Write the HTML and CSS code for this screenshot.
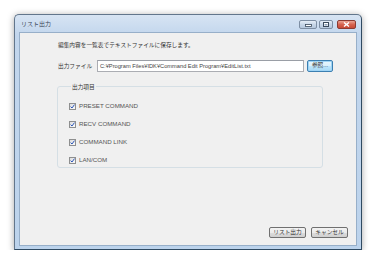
FILE: index.html
```html
<!DOCTYPE html>
<html lang="ja">
<head>
    <meta charset="UTF-8">
    <title>リスト出力</title>
    <link rel="stylesheet" href="styles.css">
</head>
<body>
    <div class="ventana">
        <div class="barra-titulo">
            <span class="titulo">リスト出力</span>
            <div class="botones-titulo">
                <span class="boton-cap boton-min">
                    <svg width="7" height="3" viewBox="0 0 7 3"><rect x="0.5" y="0.5" width="6" height="2" fill="#fff" stroke="#3a4a5c" stroke-width="0.8"/></svg>
                </span>
                <span class="boton-cap boton-max">
                    <svg width="6" height="5" viewBox="0 0 6 5"><rect x="0.5" y="0.5" width="5" height="4" fill="#fff" stroke="#3a4a5c" stroke-width="1"/><rect x="1.5" y="2" width="3" height="1.5" fill="#8ea3bb"/></svg>
                </span>
                <span class="boton-cap boton-cerrar">
                    <svg width="7" height="5" viewBox="0 0 7 5"><path d="M1 0.5 L6 4.5 M6 0.5 L1 4.5" stroke="#fff" stroke-width="1.4"/></svg>
                </span>
            </div>
        </div>

        <div class="cliente">
            <p class="descripcion">編集内容を一覧表でテキストファイルに保存します。</p>

            <div class="fila-archivo">
                <span class="etiqueta">出力ファイル</span>
                <div class="campo">C:¥Program Files¥IDK¥Command Edit Program¥EditList.txt</div>
                <button class="boton boton-defecto">参照...</button>
            </div>

            <fieldset class="grupo">
                <legend>出力項目</legend>
                <div class="fila-check"><span class="casilla"><svg width="5" height="5" viewBox="0 0 5 5"><path d="M0.6 2.6 L2 4 L4.5 0.6" fill="none" stroke="#2a55b8" stroke-width="1"/></svg></span>PRESET COMMAND</div>
                <div class="fila-check"><span class="casilla"><svg width="5" height="5" viewBox="0 0 5 5"><path d="M0.6 2.6 L2 4 L4.5 0.6" fill="none" stroke="#2a55b8" stroke-width="1"/></svg></span>RECV COMMAND</div>
                <div class="fila-check"><span class="casilla"><svg width="5" height="5" viewBox="0 0 5 5"><path d="M0.6 2.6 L2 4 L4.5 0.6" fill="none" stroke="#2a55b8" stroke-width="1"/></svg></span>COMMAND LINK</div>
                <div class="fila-check"><span class="casilla"><svg width="5" height="5" viewBox="0 0 5 5"><path d="M0.6 2.6 L2 4 L4.5 0.6" fill="none" stroke="#2a55b8" stroke-width="1"/></svg></span>LAN/COM</div>
            </fieldset>

            <div class="acciones">
                <button class="boton">リスト出力</button>
                <button class="boton">キャンセル</button>
            </div>
        </div>
    </div>
</body>
</html>
```

FILE: styles.css
```css
body {
    margin: 0;
    background: #ffffff;
    font-family: "Liberation Sans", "Noto Sans CJK JP", sans-serif;
    font-size: 6.2px;
    color: #333333;
}

.ventana {
    box-sizing: border-box;
    width: 348px;
    height: 236px;
    margin: 14px 0 0 14px;
    display: flex;
    flex-direction: column;
    border: 1px solid #62768c;
    border-right-color: #2f4a62;
    border-bottom-color: #2f4a62;
    border-radius: 5px 5px 0 0;
    background: linear-gradient(#d7e4f3, #c2d6ed 20px, #bcd3ec);
    box-shadow: 0 1px 7px rgba(0, 0, 0, 0.35);
    padding: 0 4px 3px 4px;
}

.barra-titulo {
    height: 17px;
    display: flex;
    justify-content: space-between;
    align-items: flex-start;
}

.titulo {
    font-size: 6px;
    color: #3a4656;
    line-height: 18px;
    padding-left: 2px;
}

.botones-titulo {
    display: flex;
    gap: 2px;
    padding-top: 5px;
    padding-right: 1px;
}

.boton-cap {
    box-sizing: border-box;
    height: 9px;
    display: flex;
    align-items: center;
    justify-content: center;
    border: 1px solid #7d8ea3;
    border-radius: 2px;
    background: linear-gradient(#e6eef7, #c7d6e7 50%, #b6c8dd);
}

.boton-min {
    width: 18px;
}

.boton-min svg {
    margin-top: 2px;
}

.boton-max {
    width: 14px;
}

.boton-cerrar {
    width: 19px;
    margin-left: 2px;
    border-color: #8c3b32;
    background: linear-gradient(#eba494, #d6634f 50%, #c84a36);
}

.cliente {
    flex: 1;
    display: flex;
    flex-direction: column;
    background: #f0f0f0;
    border: 1px solid #97afc9;
    padding: 8px 8px 7px 38px;
}

.descripcion {
    margin: 0;
    height: 8px;
    line-height: 8px;
    font-size: 5.7px;
}

.fila-archivo {
    display: flex;
    align-items: center;
    margin-top: 10px;
    height: 13px;
}

.etiqueta {
    width: 39px;
    font-size: 5.7px;
}

.campo {
    box-sizing: border-box;
    width: 207px;
    height: 12px;
    line-height: 10px;
    background: #ffffff;
    border: 1px solid #abadb3;
    border-top-color: #9a9ea6;
    padding-left: 2px;
    font-size: 5.7px;
    color: #444444;
    white-space: nowrap;
    overflow: hidden;
}

.boton {
    box-sizing: border-box;
    height: 11px;
    padding: 0;
    border: 1px solid #707070;
    border-radius: 2px;
    background: linear-gradient(#f2f2f2, #ebebeb 50%, #dddddd 51%, #cfcfcf);
    font-family: inherit;
    font-size: 5.7px;
    color: #333333;
    line-height: 9px;
}

.boton-defecto {
    width: 26px;
    height: 12px;
    margin-left: 3px;
    border-color: #3c7fb1;
    box-shadow: inset 0 0 0 1px #9fd4f5;
    background: linear-gradient(#eaf6fd, #d9f0fc 50%, #bee6fd 51%, #a7d9f5);
}

.grupo {
    box-sizing: border-box;
    width: 266px;
    height: 86px;
    margin: 10px 0 0 -1px;
    padding: 11px 0 0 11px;
    border: 1px solid #d5dfe5;
    border-radius: 3px;
    display: flex;
    flex-direction: column;
    gap: 10px;
}

.grupo legend {
    padding: 0 1px;
    margin-left: 2px;
    font-size: 5.7px;
}

.fila-check {
    display: flex;
    align-items: center;
    gap: 3px;
    height: 8px;
    line-height: 8px;
    color: #555555;
}

.casilla {
    box-sizing: border-box;
    width: 7px;
    height: 7px;
    display: flex;
    align-items: center;
    justify-content: center;
    border: 1px solid #8e8f8f;
    background: linear-gradient(135deg, #dcdcdc, #fbfbfb);
}

.acciones {
    margin-top: auto;
    display: flex;
    justify-content: flex-end;
    gap: 5px;
}

.acciones .boton {
    width: 37px;
}
```
